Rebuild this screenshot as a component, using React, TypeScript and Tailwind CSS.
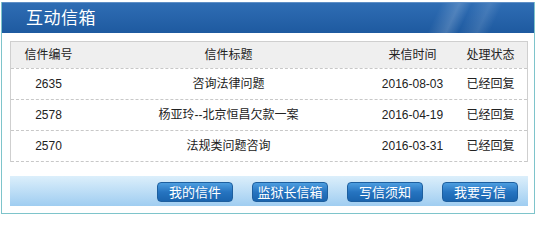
const rows = [
  { id: '2635', title: '咨询法律问题', date: '2016-08-03', status: '已经回复' },
  { id: '2578', title: '杨亚玲--北京恒昌欠款一案', date: '2016-04-19', status: '已经回复' },
  { id: '2570', title: '法规类问题咨询', date: '2016-03-31', status: '已经回复' },
]

const buttons = ['我的信件', '监狱长信箱', '写信须知', '我要写信']

const cjk = "font-['Liberation_Sans','Noto_Sans_CJK_SC',sans-serif]"

export default function App() {
  return (
    <div className={`h-[226px] w-[543px] bg-white pt-[2px] ${cjk}`}>
      <div className="ml-px flex h-[212px] w-[534px] flex-col border-x border-b border-[#7ec4cb]">
        {/* title bar */}
        <div className="relative flex h-[31px] items-center overflow-hidden border-t border-[#5f8fc6] bg-[linear-gradient(#2f6db4,#1e5aa0)] pl-[24px]">
          <div className="absolute right-[20px] top-0 h-full w-[110px] bg-[linear-gradient(115deg,transparent_30%,rgba(255,255,255,0.18)_45%,transparent_55%,rgba(255,255,255,0.12)_70%,transparent_80%)]" />
          <span className="relative text-[17px] leading-none tracking-[0.5px] text-white">互动信箱</span>
        </div>

        {/* letter table */}
        <div className="ml-[8px] mt-[8px] w-[518px] border border-b-0 border-[#cfcfcf] text-[12px] text-[#222]">
          <div className="grid h-[26px] grid-cols-[75px_285px_83px_1fr] items-center bg-[#efefef] text-center">
            <span>信件编号</span>
            <span>信件标题</span>
            <span>来信时间</span>
            <span>处理状态</span>
          </div>
          {rows.map((r, i) => (
            <div
              key={r.id}
              className={`grid grid-cols-[75px_285px_83px_1fr] items-center border-b border-dashed border-[#c8c8c8] text-center ${i === 0 ? 'h-[32px] border-t' : 'h-[31px]'}`}
            >
              <span>{r.id}</span>
              <span>{r.title}</span>
              <span>{r.date}</span>
              <span>{r.status}</span>
            </div>
          ))}
        </div>

        {/* button bar */}
        <div className="ml-[8px] mt-[14px] flex h-[30px] w-[518px] items-start justify-end gap-[19px] bg-[linear-gradient(#dceffb,#9fcdf1)] pr-[10px] pt-[6px]">
          {buttons.map((b) => (
            <button
              key={b}
              className="flex h-[20px] w-[76px] items-center justify-center rounded-[4px] border border-[#1d5f9f] bg-[linear-gradient(#4d9ee0,#2674c0_50%,#1a64ae)] text-[13px] leading-none text-white"
            >
              {b}
            </button>
          ))}
        </div>
      </div>
    </div>
  )
}
